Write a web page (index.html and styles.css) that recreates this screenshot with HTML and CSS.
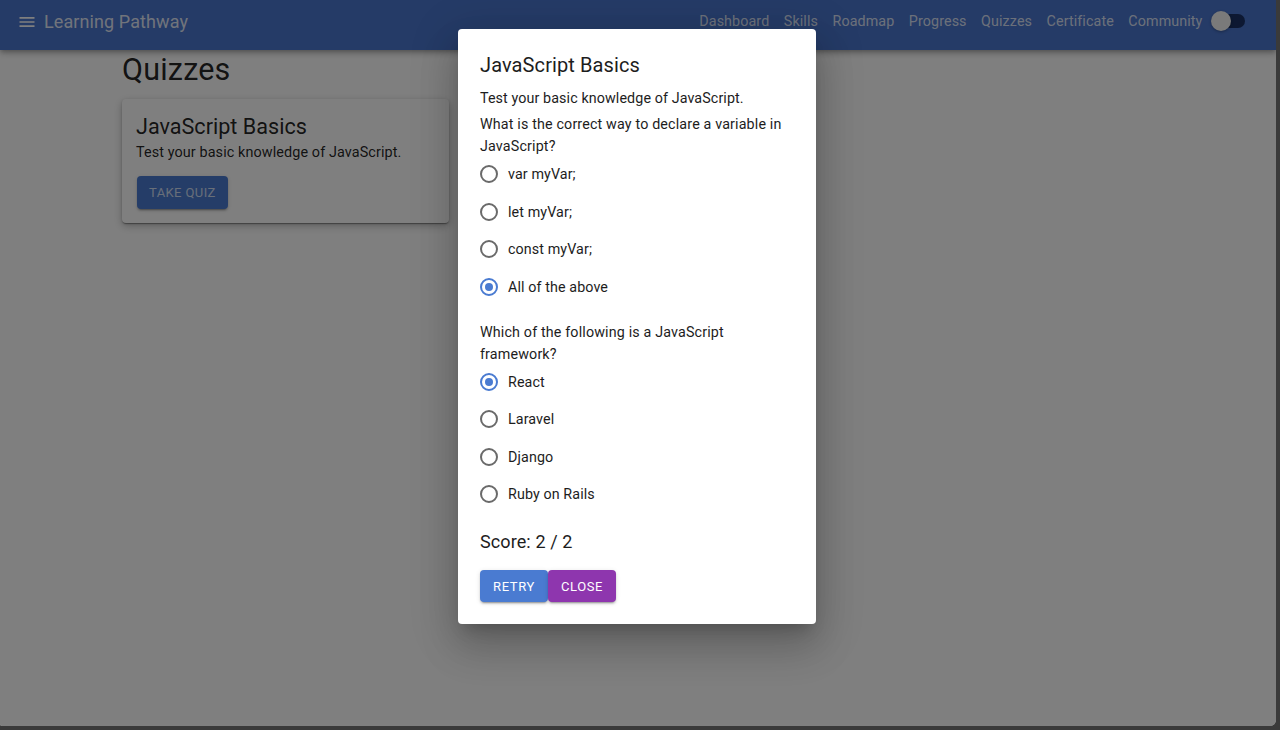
FILE: index.html
```html
<!DOCTYPE html>
<html lang="en">
<head>
<meta charset="utf-8">
<title>Learning Pathway - Quizzes</title>
<link rel="stylesheet" href="styles.css">
</head>
<body>
<div class="frame">
  <header class="appbar">
    <div class="brand">
      <svg class="menu-icon" viewBox="0 0 24 24" width="24" height="24"><path d="M3 18h18v-2H3v2zm0-5h18v-2H3v2zm0-7v2h18V6H3z" fill="currentColor"/></svg>
      <span class="brand-title">Learning Pathway</span>
    </div>
    <nav class="nav">
      <a class="nav-link">Dashboard</a>
      <a class="nav-link">Skills</a>
      <a class="nav-link">Roadmap</a>
      <a class="nav-link">Progress</a>
      <a class="nav-link">Quizzes</a>
      <a class="nav-link">Certificate</a>
      <a class="nav-link">Community</a>
      <span class="switch"><span class="switch-track"></span><span class="switch-thumb"></span></span>
    </nav>
  </header>

  <main class="content">
    <h1 class="page-title">Quizzes</h1>
    <div class="card">
      <h2 class="card-title">JavaScript Basics</h2>
      <p class="card-text">Test your basic knowledge of JavaScript.</p>
      <button class="btn btn-primary btn-take">Take Quiz</button>
    </div>
  </main>

  <div class="backdrop"></div>

  <div class="dialog-wrap">
    <div class="dialog">
      <h2 class="dialog-title">JavaScript Basics</h2>
      <p class="dialog-desc">Test your basic knowledge of JavaScript.</p>

      <div class="question">
        <p class="q-text">What is the correct way to declare a variable in JavaScript?</p>
        <div class="options">
          <label class="option"><span class="radio"></span><span>var myVar;</span></label>
          <label class="option"><span class="radio"></span><span>let myVar;</span></label>
          <label class="option"><span class="radio"></span><span>const myVar;</span></label>
          <label class="option"><span class="radio checked"></span><span>All of the above</span></label>
        </div>
      </div>

      <div class="question">
        <p class="q-text q-second">Which of the following is a JavaScript framework?</p>
        <div class="options">
          <label class="option"><span class="radio checked"></span><span>React</span></label>
          <label class="option"><span class="radio"></span><span>Laravel</span></label>
          <label class="option"><span class="radio"></span><span>Django</span></label>
          <label class="option"><span class="radio"></span><span>Ruby on Rails</span></label>
        </div>
      </div>

      <p class="score">Score: 2 / 2</p>
      <div class="actions">
        <button class="btn btn-primary">Retry</button>
        <button class="btn btn-secondary">Close</button>
      </div>
    </div>
  </div>
</div>
</body>
</html>
```
FILE: styles.css
```css
html, body {
  margin: 0;
  padding: 0;
  height: 100%;
}
body {
  background: #3a3a3a;
  font-family: Roboto, "Liberation Sans", Arial, sans-serif;
  color: rgba(0, 0, 0, 0.87);
  overflow: hidden;
}
.frame {
  position: relative;
  width: 1276px;
  height: 726px;
  background: #ffffff;
  overflow: hidden;
  border-bottom-right-radius: 6px;
  border-bottom-left-radius: 2px;
}

/* App bar */
.appbar {
  height: 50px;
  box-sizing: border-box;
  padding: 0 31px 8px 17px;
  background: #4a76cf;
  color: #ffffff;
  display: flex;
  align-items: center;
  justify-content: space-between;
  box-shadow: 0 2px 4px -1px rgba(0,0,0,0.2), 0 4px 5px 0 rgba(0,0,0,0.14), 0 1px 10px 0 rgba(0,0,0,0.12);
  position: relative;
}
.brand {
  display: flex;
  align-items: center;
  gap: 7px;
}
.menu-icon {
  width: 20px;
  height: 20px;
  margin-top: 1px;
}
.brand-title {
  font-size: 18px;
  font-weight: 400;
  letter-spacing: 0.1px;
  color: rgba(255,255,255,0.85);
}
.nav {
  display: flex;
  align-items: center;
  gap: 14.5px;
}
.nav-link {
  font-size: 14.3px;
  color: rgba(255,255,255,0.8);
  letter-spacing: 0.1px;
}
.switch {
  position: relative;
  width: 34px;
  height: 20px;
  margin-left: -6px;
  display: inline-block;
}
.switch-track {
  position: absolute;
  left: 8px;
  top: 3px;
  width: 26px;
  height: 14px;
  border-radius: 7px;
  background: #0e2048;
  opacity: 0.8;
}
.switch-thumb {
  position: absolute;
  left: 0;
  top: 0;
  width: 20px;
  height: 20px;
  border-radius: 50%;
  background: #f4f4f4;
  box-shadow: 0 1px 3px rgba(0,0,0,0.3);
}

/* Content */
.content {
  padding: 0 122px;
}
.page-title {
  margin: 0;
  padding-top: 0;
  font-size: 30.5px;
  font-weight: 400;
  line-height: 40px;
  letter-spacing: 0.2px;
}
.card {
  width: 297px;
  margin-top: 9px;
  padding: 14px 16px 14px 14px;
  border-radius: 4px;
  background: #ffffff;
  box-shadow: 0 2px 1px -1px rgba(0,0,0,0.2), 0 1px 1px 0 rgba(0,0,0,0.14), 0 1px 3px 0 rgba(0,0,0,0.12), 0 3px 8px rgba(0,0,0,0.25);
}
.card-title {
  margin: 0;
  font-size: 21.6px;
  font-weight: 400;
  line-height: 28px;
}
.card-text {
  margin: 1px 0 12px 0;
  font-size: 14.4px;
  line-height: 22px;
  letter-spacing: 0.1px;
}

/* Buttons */
.btn {
  font-family: Roboto, "Liberation Sans", Arial, sans-serif;
  border: none;
  border-radius: 4px;
  color: #ffffff;
  font-size: 13px;
  font-weight: 400;
  letter-spacing: 0.6px;
  text-transform: uppercase;
  height: 32px;
  padding: 0 14px;
  cursor: pointer;
  box-shadow: 0 3px 1px -2px rgba(0,0,0,0.2), 0 2px 2px 0 rgba(0,0,0,0.14), 0 1px 5px 0 rgba(0,0,0,0.12);
}
.btn-primary {
  background: #4a7bd1;
}
.btn-secondary {
  background: #8e36ae;
}
.btn-take {
  height: 33px;
  margin-left: 1px;
  padding: 0 12px;
  letter-spacing: 0.4px;
  color: rgba(255,255,255,0.75);
}

/* Overlay */
.backdrop {
  position: absolute;
  inset: 0;
  background: rgba(0, 0, 0, 0.5);
}
.dialog-wrap {
  position: absolute;
  inset: 0;
  display: flex;
  justify-content: center;
  align-items: flex-start;
  padding: 29px 2px 0 0;
}
.dialog {
  width: 314px;
  padding: 20px 22px 22px 22px;
  background: #ffffff;
  border-radius: 4px;
  box-shadow: 0 11px 15px -7px rgba(0,0,0,0.2), 0 24px 38px 3px rgba(0,0,0,0.14), 0 9px 46px 8px rgba(0,0,0,0.12);
  color: #1d1d1d;
}
.dialog-title {
  margin: 0;
  font-size: 20px;
  font-weight: 400;
  line-height: 32px;
  letter-spacing: 0.1px;
}
.dialog-desc {
  margin: 0;
  padding-top: 6px;
  font-size: 14.3px;
  line-height: 22px;
  letter-spacing: 0.1px;
}
.question {
  margin-bottom: 15px;
}
.q-text {
  margin: 4px 0 0 0;
  font-size: 14.3px;
  line-height: 22px;
  letter-spacing: 0.15px;
}
.q-second {
  margin-top: 2px;
}
.options {
  display: flex;
  flex-direction: column;
  margin-top: -1.5px;
}
.option {
  display: flex;
  align-items: center;
  gap: 10px;
  height: 37.5px;
  font-size: 14.3px;
  letter-spacing: 0.1px;
}
.radio {
  width: 18px;
  height: 18px;
  box-sizing: border-box;
  border: 2px solid #6a6a6a;
  border-radius: 50%;
  position: relative;
  flex: none;
}
.radio.checked {
  border-color: #4a7bd1;
}
.radio.checked::after {
  content: "";
  position: absolute;
  left: 3px;
  top: 3px;
  width: 8px;
  height: 8px;
  border-radius: 50%;
  background: #4a7bd1;
}
.score {
  margin: 0;
  padding-top: 2px;
  font-size: 18px;
  line-height: 24px;
  letter-spacing: 0.1px;
}
.actions {
  display: flex;
  margin-top: 16px;
}
.actions .btn {
  width: 68px;
  padding: 0;
}
```
